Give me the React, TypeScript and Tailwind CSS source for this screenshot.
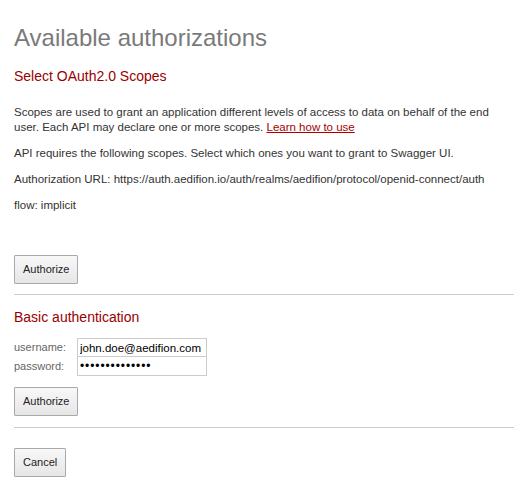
import React from 'react';

const font = { fontFamily: '"Liberation Sans", Arial, sans-serif' };

const Btn = ({ label }: { label: string }) => (
  <button className="h-[29px] px-[8px] border border-[#a9a9a9] rounded-[1px] bg-gradient-to-b from-[#f8f8f8] to-[#e6e6e6] text-[11px] text-[#222] leading-none">
    {label}
  </button>
);

export default function App() {
  return (
    <div className="bg-white min-h-[493px] pl-[14px] pr-[15px] pt-[24px] text-[#333]" style={font}>
      <h2 className="text-[24px] leading-[28px] text-[#7a7a7a]">Available authorizations</h2>

      {/* OAuth2 */}
      <h3 className="mt-[16px] text-[14px] leading-[16px] text-[#990000]">Select OAuth2.0 Scopes</h3>
      <p className="mt-[21px] text-[11.5px] leading-[15px]">
        Scopes are used to grant an application different levels of access to data on behalf of the end user. Each API may
        declare one or more scopes.{' '}
        <a href="#" className="text-[#aa0000] underline">Learn how to use</a>
      </p>
      <p className="mt-[11px] text-[11.5px] leading-[15px]">API requires the following scopes. Select which ones you want to grant to Swagger UI.</p>
      <p className="mt-[11px] text-[11.5px] leading-[15px]">
        Authorization URL: https://auth.aedifion.io/auth/realms/aedifion/protocol/openid-connect/auth
      </p>
      <p className="mt-[11px] text-[11.5px] leading-[15px]">flow: implicit</p>

      <div className="mt-[42px] flex">
        <Btn label="Authorize" />
      </div>
      <hr className="mt-[10px] border-0 border-t border-[#cccccc]" />

      {/* Basic auth */}
      <h3 className="mt-[14px] text-[14px] leading-[16px] text-[#990000]">Basic authentication</h3>
      <div className="mt-[13px] flex flex-col">
        <div className="flex items-center h-[19px]">
          <label className="w-[63px] text-[11px] text-[#666]">username:</label>
          <input
            readOnly
            value="john.doe@aedifion.com"
            className="w-[130px] h-[19px] border border-[#cccccc] px-[2px] text-[11.5px] text-black outline-none"
          />
        </div>
        <div className="flex items-center h-[19px]">
          <label className="w-[63px] text-[11px] text-[#666]">password:</label>
          <input
            readOnly
            type="password"
            value="aedifionsecret"
            className="w-[130px] h-[19px] border border-t-0 border-[#cccccc] px-[2px] text-[12px] tracking-[0.9px] text-black outline-none"
          />
        </div>
      </div>
      <div className="mt-[11px] flex">
        <Btn label="Authorize" />
      </div>
      <hr className="mt-[11px] border-0 border-t border-[#cccccc]" />

      <div className="mt-[20px] flex">
        <Btn label="Cancel" />
      </div>
    </div>
  );
}
